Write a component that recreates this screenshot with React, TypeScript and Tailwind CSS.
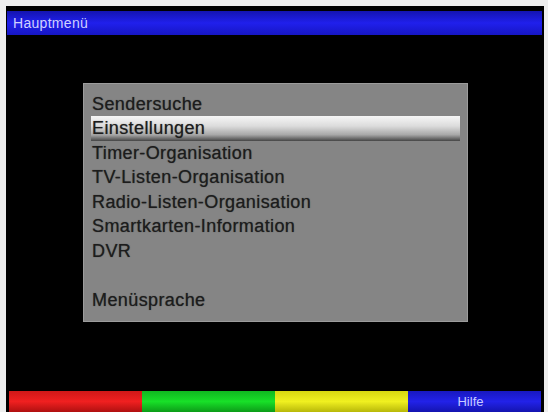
const items = [
  'Sendersuche',
  'Einstellungen',
  'Timer-Organisation',
  'TV-Listen-Organisation',
  'Radio-Listen-Organisation',
  'Smartkarten-Information',
  'DVR',
  '',
  'Menüsprache',
];

export default function App() {
  const selected = 1;

  return (
    <div className="w-[548px] h-[412px] bg-[#eeeeee] pt-[6px] pl-[6px] pr-[4px] font-['Liberation_Sans',Arial,sans-serif]">
      <div className="flex h-full flex-col bg-black">
        {/* Titelleiste */}
        <div className="mt-[5px] ml-[1px] mr-[2px] flex h-[24px] items-center bg-gradient-to-b from-[#1414b0] via-[#2020ec] to-[#1616c4] px-[6px]">
          <span className="text-[14px] leading-none tracking-[0.3px] text-[#cfd0ff]">Hauptmenü</span>
        </div>

        {/* Menü */}
        <div className="ml-[77px] mt-[48px] h-[239px] w-[385px] border border-[#9c9c9c] bg-[#858585] pt-[7.5px]">
          {items.map((item, i) => (
            <div
              key={i}
              className={
                i === selected
                  ? 'mx-[7px] flex h-[24.5px] items-center bg-[linear-gradient(to_bottom,#f6f6f6_0%,#dcdcdc_40%,#a8a8a8_75%,#454545_100%)] px-[1px]'
                  : 'mx-[7px] flex h-[24.5px] items-center px-[1px]'
              }
            >
              <span className="text-[18px] leading-none tracking-[0.4px] text-[#1c1c1c] [text-shadow:0_0_1px_rgba(0,0,0,0.55)]">
                {item}
              </span>
            </div>
          ))}
        </div>

        {/* Farbtasten */}
        <div className="mt-auto ml-[3px] mr-[3px] grid h-[21px] grid-cols-4">
          <div className="bg-gradient-to-b from-[#d01818] via-[#f02020] to-[#b01010]" />
          <div className="bg-gradient-to-b from-[#10b820] via-[#18e028] to-[#0c9c18]" />
          <div className="bg-gradient-to-b from-[#d8d810] via-[#f0f020] to-[#b8b808]" />
          <div className="flex items-center justify-center bg-gradient-to-b from-[#1818c0] via-[#2222e8] to-[#1414b0]">
            <span className="mr-[8px] text-[13px] leading-none text-[#c8ccff]">Hilfe</span>
          </div>
        </div>
      </div>
    </div>
  );
}
